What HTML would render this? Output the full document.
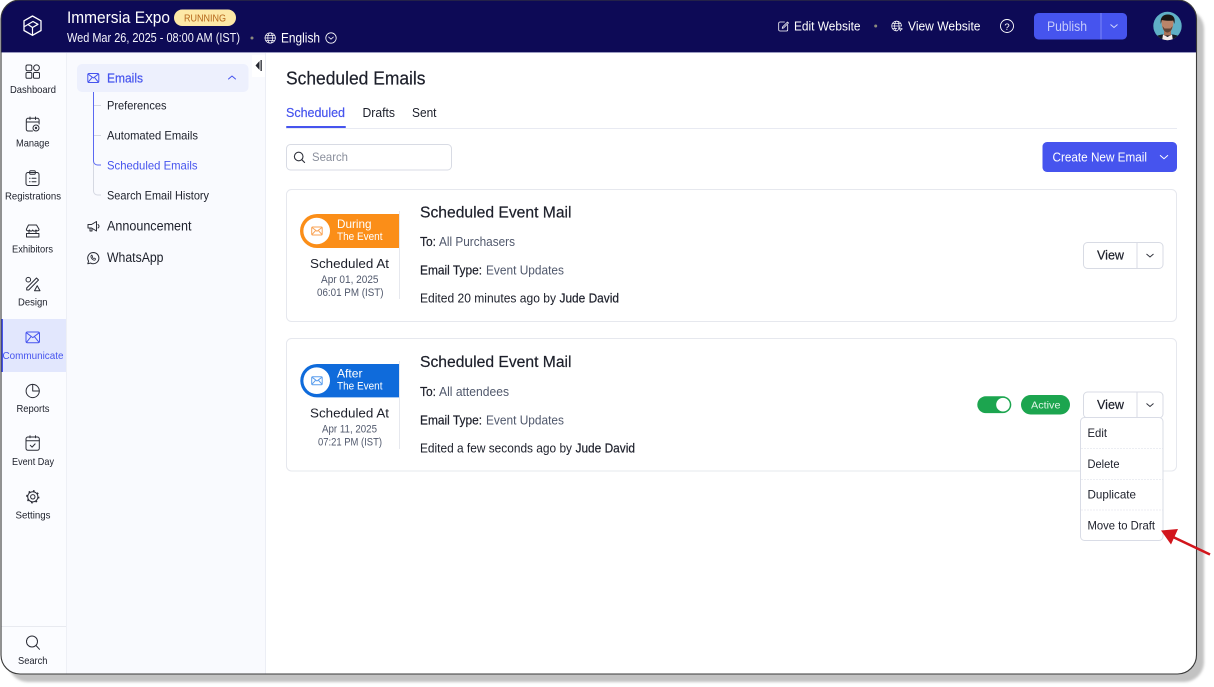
<!DOCTYPE html>
<html><head><meta charset="utf-8"><title>Scheduled Emails</title>
<style>
html,body{margin:0;padding:0;background:#fff;width:1214px;height:687px;overflow:hidden}
svg{display:block}
text{font-family:"Liberation Sans",sans-serif;fill:#1c1f2a}
.m{stroke:#1c1f2a;stroke-width:.2}
.b{fill:#4654ee}
.g{fill:#50586c}
.ic{fill:none;stroke:#2a2c36;stroke-width:1;stroke-linecap:round;stroke-linejoin:round}
.wi{fill:none;stroke:#fff;stroke-width:.9;stroke-linecap:round;stroke-linejoin:round}
.bi{fill:none;stroke:#4654ee;stroke-width:1;stroke-linecap:round;stroke-linejoin:round}
</style></head><body>
<svg width="1214" height="687" viewBox="0 0 1214 687" xmlns="http://www.w3.org/2000/svg">
<defs>
<filter id="bl" x="-5%" y="-5%" width="110%" height="110%"><feGaussianBlur stdDeviation="1.3"/></filter>
<clipPath id="fr"><rect x="1" y="0" width="1195.5" height="674" rx="19"/></clipPath>
<clipPath id="av"><circle cx="1167.5" cy="26" r="14.2"/></clipPath>
</defs>
<rect x="8" y="9" width="1196" height="673" rx="20" fill="#c2c2c2" filter="url(#bl)"/>
<g clip-path="url(#fr)">
<rect x="0" y="0" width="1198" height="675" fill="#fff"/>
<rect x="0" y="0" width="1198" height="52" fill="#0d0a56"/>
<rect x="0" y="52" width="1198" height="1" fill="#9a9ac0"/>
<rect x="1" y="53" width="65" height="622" fill="#fbfcff"/>
<rect x="66" y="53" width="1" height="622" fill="#eef0f6"/>
<rect x="67" y="53" width="198" height="622" fill="#f9fafe"/>
<rect x="265" y="53" width="1" height="622" fill="#eceef5"/>
<rect x="2" y="319" width="64" height="53" fill="#e2e7fd"/>
<rect x="1" y="319" width="2" height="53" fill="#4654ee"/>
<rect x="1" y="626" width="65" height="1" fill="#e8eaf0"/>
</g>
<!-- logo -->
<path d="M32.500 16l8.500 4.800v9.700l-8.500 4.800-8.500-4.800v-9.700z" fill="none" stroke="#fff" stroke-width="1.300" stroke-linejoin="round"/>
<path d="M24.500 26.500L33 21.500l5 2.800-5.500 3.200v7M28 24.500l4.500 3" fill="none" stroke="#fff" stroke-width="1.200" stroke-linejoin="round"/>
<!-- header left -->
<text x="67" y="23" font-size="17" style="fill:#fff" textLength="103" lengthAdjust="spacingAndGlyphs">Immersia Expo</text>
<rect x="174" y="9.500" width="62" height="16.500" rx="8.200" fill="#fde8a6"/>
<text x="184" y="21.300" font-size="10.500" style="fill:#b5661a" textLength="42" lengthAdjust="spacingAndGlyphs">RUNNING</text>
<text x="67" y="42" font-size="13" style="fill:#f4f4fb" textLength="173" lengthAdjust="spacingAndGlyphs">Wed Mar 26, 2025 - 08:00 AM (IST)</text>
<circle cx="252" cy="38" r="1.500" fill="#8b8b7d"/>
<g class="wi" style="stroke-width:.7"><circle cx="270.200" cy="38" r="5.200"/><ellipse cx="270.200" cy="38" rx="2.400" ry="5.200"/><path d="M265 38h10.400M265.800 35.400h8.800M265.800 40.600h8.800"/></g>
<text x="281" y="42.500" font-size="14" style="fill:#fff" textLength="39" lengthAdjust="spacingAndGlyphs">English</text>
<g class="wi" style="stroke-width:.8"><circle cx="331" cy="38" r="5.200"/><path d="M328.600 37l2.400 2.200 2.400-2.200"/></g>
<!-- header right -->
<g class="wi" style="stroke-width:.8"><path d="M784.500 22h-4.500a1.300 1.300 0 0 0-1.300 1.300v6.400a1.300 1.300 0 0 0 1.300 1.300h6.400a1.300 1.300 0 0 0 1.300-1.300v-4.700"/><path d="M782.500 27l5-5 1 1-5 5-1.300.3z"/></g>
<text x="794" y="30.500" font-size="13" style="fill:#fff" textLength="66.500" lengthAdjust="spacingAndGlyphs">Edit Website</text>
<circle cx="875.700" cy="26" r="1.500" fill="#8b8b7d"/>
<g class="wi" style="stroke-width:.7"><path d="M901.500 26a4.900 4.900 0 1 0-4.900 4.900"/><ellipse cx="896.800" cy="26" rx="2.200" ry="4.900"/><path d="M892 26h9.500M892.800 23.500h8M892.800 28.500h4"/><path d="M899 27.500l3.400 1.400-1.400.6-.6 1.400z"/></g>
<text x="908" y="30.500" font-size="13" style="fill:#fff" textLength="72.500" lengthAdjust="spacingAndGlyphs">View Website</text>
<circle cx="1007" cy="26" r="6.500" class="wi"/>
<text x="1004.400" y="29.800" font-size="9.500" style="fill:#fff">?</text>
<rect x="1034" y="13" width="93" height="26.500" rx="4.500" fill="#4654ee"/>
<rect x="1100.500" y="13" width="1" height="26.500" fill="#7c86f5"/>
<text x="1047" y="31" font-size="13.500" style="fill:#c6cbfb" textLength="40" lengthAdjust="spacingAndGlyphs">Publish</text>
<path d="M1110.500 24.500l3.500 3 3.500-3" fill="none" stroke="#d5d9fd" stroke-width="1"/>
<!-- avatar -->
<g clip-path="url(#av)">
<rect x="1152" y="11" width="32" height="30" fill="#5fb0c6"/>
<path d="M1153 41c1-5 4-5.500 9-6.500h11c5 1 8 1.500 9 6.500z" fill="#161a24"/>
<path d="M1163 34.500l4.500 2.500 4.500-2.500 1 6.500h-11z" fill="#f4ecec"/>
<rect x="1164" y="29" width="7" height="6.500" fill="#a87358"/>
<path d="M1161.500 20c0 8 2 12.500 6 12.500s6-4.500 6-12.500z" fill="#b98469"/>
<path d="M1162.500 26c.5 4 2.500 6.500 5 6.500s4.500-2.500 5-6.500l-2 2.500h-6z" fill="#5f4436"/>
<path d="M1160.800 24c-1-6 1.800-9.500 7-9.500s8 3 6.500 9.500l-1-3.500c-3 .5-7 .3-11.500-.5z" fill="#1a1613"/>
</g>
<!-- rail icons -->
<g class="ic">
<rect x="26" y="65" width="5.800" height="5.800" rx="1.500"/><circle cx="36.500" cy="67.800" r="2.900"/><rect x="26" y="72.500" width="5.800" height="5.800" rx="1.200"/><rect x="33.500" y="72.500" width="6" height="5.800" rx="1.200"/>
<path d="M32.500 131H28a1.700 1.700 0 0 1-1.700-1.700V120a1.700 1.700 0 0 1 1.700-1.700h9.400a1.700 1.700 0 0 1 1.700 1.700v4M26.300 122h12.800M30 117v2.500M35.500 117v2.500"/>
<circle cx="36" cy="128" r="3"/><circle cx="36" cy="128" r=".7"/>
<rect x="26" y="172.500" width="13" height="13" rx="2"/><rect x="29.700" y="170.800" width="5.600" height="3.400" rx="1"/><path d="M29.500 178.200h.6M32 178.200h4M29.500 181.800h.6M32 181.800h4"/>
<path d="M28.500 225h8l2.500 4.200a1.600 1.600 0 0 1-3 .8 1.800 1.800 0 0 1-3.300 0 1.800 1.800 0 0 1-3.300 0 1.600 1.600 0 0 1-3-.8z"/><path d="M29 231v2.500M36 231v2.500M26.500 233.500h12.400v3.500H26.500z"/>
<circle cx="28.300" cy="279.700" r="2.300"/><path d="M26.700 288l9.800-10 2 2-9.800 10h-2z"/><path d="M34.500 290.700l2.700-5 2.800 5z"/>
<circle cx="32.700" cy="391" r="6.600"/><path d="M32.700 384.400V391h6.600"/>
<rect x="26" y="437" width="13.300" height="13.300" rx="2"/><path d="M26 440.800h13.300M30 435.800v2M35.500 435.800v2M30.300 445.300l1.800 1.800 3-3.200"/>
<circle cx="32.800" cy="496.800" r="2.200"/>
<circle cx="32.800" cy="496.800" r="5.100"/>
</g>
<circle cx="32.800" cy="496.800" r="5.900" fill="none" stroke="#2a2c36" stroke-width="1.500" stroke-dasharray="1.700 2.930"/>
<g class="ic"><circle cx="32" cy="641.500" r="5.500"/><path d="M36 645.500l3.500 3.800"/></g>
<g class="bi"><rect x="26" y="332" width="13.500" height="10.800" rx="1.500"/><path d="M26.500 332.800l6.300 4.800 6.300-4.800M26.500 342.300l4.500-5.600M39 342.300l-4.500-5.600"/></g>
<!-- rail labels -->
<g font-size="10.300">
<text x="10" y="93" textLength="46" lengthAdjust="spacingAndGlyphs">Dashboard</text>
<text x="16" y="146.300" textLength="33.500" lengthAdjust="spacingAndGlyphs">Manage</text>
<text x="5" y="199.300" textLength="56" lengthAdjust="spacingAndGlyphs">Registrations</text>
<text x="12" y="252.500" textLength="41" lengthAdjust="spacingAndGlyphs">Exhibitors</text>
<text x="18" y="305.500" textLength="29.500" lengthAdjust="spacingAndGlyphs">Design</text>
<text x="2.500" y="359" textLength="61" lengthAdjust="spacingAndGlyphs" class="b">Communicate</text>
<text x="16.500" y="412" textLength="33" lengthAdjust="spacingAndGlyphs">Reports</text>
<text x="12" y="465" textLength="42" lengthAdjust="spacingAndGlyphs">Event Day</text>
<text x="15.500" y="518.500" textLength="35" lengthAdjust="spacingAndGlyphs">Settings</text>
<text x="18" y="664" textLength="29.500" lengthAdjust="spacingAndGlyphs">Search</text>
</g>
<!-- secondary nav -->
<rect x="77" y="64" width="171.500" height="28" rx="5" fill="#edf0fd"/>
<g class="bi"><rect x="87.800" y="73.500" width="11" height="9" rx="1.300"/><path d="M88.300 74.200l5 3.800 5-3.800M88.300 82l3.500-4.200M98.300 82l-3.500-4.200"/><path d="M228.500 79l3.500-3 3.500 3"/></g>
<text x="107" y="82.300" font-size="13" class="b" textLength="36" lengthAdjust="spacingAndGlyphs" stroke="#4654ee" stroke-width=".2">Emails</text>
<path d="M93.500 160V191a4 4 0 0 0 4 4h3.500" fill="none" stroke="#d5d8e2"/>
<path d="M93.500 92V161a4 4 0 0 0 4 4h3.500" fill="none" stroke="#5a68f2"/>
<path d="M94 105.500h7M94 135.500h7" stroke="#d5d8e2"/>
<g font-size="12">
<text x="107" y="109.500" textLength="59.500" lengthAdjust="spacingAndGlyphs">Preferences</text>
<text x="107" y="139.500" textLength="91" lengthAdjust="spacingAndGlyphs">Automated Emails</text>
<text x="107" y="169.500" textLength="90.500" lengthAdjust="spacingAndGlyphs" class="b">Scheduled Emails</text>
<text x="107" y="199.500" textLength="102" lengthAdjust="spacingAndGlyphs">Search Email History</text>
</g>
<g class="ic"><path d="M88 224.500h3.500l5-3v9.500l-5-3H88z"/><path d="M90 228v3h2v-2.500M98 224.500a2 2 0 0 1 0 3.500"/>
<path d="M93.300 252.500a5.600 5.600 0 0 1 0 11.200 5.600 5.600 0 0 1-2.700-.7l-2.800.8.800-2.700a5.600 5.600 0 0 1 4.700-8.600z"/><path d="M91.300 255.600c-.7.500-.6 1.800.6 3.200 1.200 1.300 2.600 1.800 3.300 1l.4-.9-1.500-.9-.6.500c-.6-.2-1.200-.9-1.400-1.500l.5-.6-.8-1.400z" style="stroke-width:.8"/></g>
<text x="107" y="230.500" font-size="13.500" textLength="84.500" lengthAdjust="spacingAndGlyphs">Announcement</text>
<text x="107" y="262" font-size="13.500" textLength="56.500" lengthAdjust="spacingAndGlyphs">WhatsApp</text>
<rect x="252" y="55" width="13" height="22" fill="#fff"/>
<path d="M259.500 61v9l-4-4.500z" fill="#23252e"/><rect x="260.500" y="60" width="1.300" height="11" fill="#23252e"/>
<!-- main -->
<text x="286" y="84.500" font-size="18" textLength="139.500" lengthAdjust="spacingAndGlyphs" class="m">Scheduled Emails</text>
<text x="286" y="117" font-size="13" class="b" stroke="#4654ee" stroke-width=".2" textLength="59" lengthAdjust="spacingAndGlyphs">Scheduled</text>
<text x="362.500" y="117" font-size="13" textLength="32.500" lengthAdjust="spacingAndGlyphs">Drafts</text>
<text x="412" y="117" font-size="13" textLength="24.500" lengthAdjust="spacingAndGlyphs">Sent</text>
<rect x="286" y="128" width="891" height="1" fill="#e8eaf2"/>
<rect x="286" y="126" width="60" height="2" rx="1" fill="#4654ee"/>
<rect x="286.500" y="144.500" width="165" height="25.500" rx="4" fill="#fff" stroke="#d8dbe4"/>
<circle cx="298.700" cy="156.500" r="4.300" fill="none" stroke="#30323c" stroke-width="1.100"/><path d="M301.800 159.700l2.800 2.800" stroke="#30323c" stroke-width="1.100" stroke-linecap="round"/>
<text x="312" y="161" font-size="12" style="fill:#8a8f9c" textLength="36" lengthAdjust="spacingAndGlyphs">Search</text>
<rect x="1042.500" y="142" width="134.500" height="30" rx="4.500" fill="#4654ee"/>
<text x="1052.500" y="161.300" font-size="13" style="fill:#fff" textLength="94.500" lengthAdjust="spacingAndGlyphs">Create New Email</text>
<path d="M1160 155.300l4 3.400 4-3.400" fill="none" stroke="#fff" stroke-width="1"/>
<!-- card 1 -->
<rect x="286.500" y="189.500" width="890" height="132" rx="5" fill="#fff" stroke="#e6e8ee"/>
<rect x="399" y="211" width="1" height="88" fill="#e6e8ee"/>
<path d="M399 214h-82a17 17 0 0 0 0 34h82z" fill="#fb8e18"/>
<circle cx="316.700" cy="231" r="13.300" fill="#fff"/>
<g fill="none" stroke="#f9a355" stroke-width="1"><rect x="311.700" y="227" width="10.500" height="8" rx="1"/><path d="M312 227.500l5 3.800 5-3.800M312 234.500l3.500-3.800M322 234.500l-3.500-3.800"/></g>
<text x="337" y="228" font-size="12" style="fill:#fff" textLength="34.500" lengthAdjust="spacingAndGlyphs">During</text>
<text x="337" y="240" font-size="11" style="fill:#fff" textLength="45.500" lengthAdjust="spacingAndGlyphs">The Event</text>
<text x="310" y="268" font-size="13" textLength="79" lengthAdjust="spacingAndGlyphs">Scheduled At</text>
<text x="321" y="283" font-size="11" class="g" textLength="57.500" lengthAdjust="spacingAndGlyphs">Apr 01, 2025</text>
<text x="317" y="296" font-size="11" class="g" textLength="66.500" lengthAdjust="spacingAndGlyphs">06:01 PM (IST)</text>
<text x="420" y="217.500" font-size="15.500" textLength="151.500" lengthAdjust="spacingAndGlyphs" class="m">Scheduled Event Mail</text>
<text x="420" y="246" font-size="12.500" textLength="16" lengthAdjust="spacingAndGlyphs" class="m">To:</text>
<text x="439" y="246" font-size="12.500" class="g" textLength="76" lengthAdjust="spacingAndGlyphs">All Purchasers</text>
<text x="420" y="274.500" font-size="12.500" textLength="62" lengthAdjust="spacingAndGlyphs" class="m">Email Type:</text>
<text x="486" y="274.500" font-size="12.500" class="g" textLength="78" lengthAdjust="spacingAndGlyphs">Event Updates</text>
<text x="420" y="302.500" font-size="12.500" textLength="136" lengthAdjust="spacingAndGlyphs">Edited 20 minutes ago by</text>
<text x="559.500" y="302.500" font-size="12.500" textLength="59.500" lengthAdjust="spacingAndGlyphs" class="m">Jude David</text>
<rect x="1083.500" y="242.500" width="79.500" height="26" rx="4" fill="#fff" stroke="#d8dbe4"/>
<rect x="1136.500" y="243" width="1" height="25" fill="#d8dbe4"/>
<text x="1097" y="259.500" font-size="13" textLength="27" lengthAdjust="spacingAndGlyphs" class="m">View</text>
<path d="M1146.500 254l3.500 3 3.500-3" fill="none" stroke="#30323c" stroke-width="1"/>
<!-- card 2 -->
<rect x="286.500" y="338.500" width="890" height="132.500" rx="5" fill="#fff" stroke="#e6e8ee"/>
<rect x="399" y="361" width="1" height="88" fill="#e6e8ee"/>
<path d="M399 364h-82a16.700 16.700 0 0 0 0 33.400h82z" fill="#0f6bdb"/>
<circle cx="316.700" cy="380.700" r="13.300" fill="#fff"/>
<g fill="none" stroke="#5a9ded" stroke-width="1"><rect x="311.700" y="376.700" width="10.500" height="8" rx="1"/><path d="M312 377.200l5 3.800 5-3.800M312 384.200l3.500-3.800M322 384.200l-3.500-3.800"/></g>
<text x="337" y="377.500" font-size="12" style="fill:#fff" textLength="25.500" lengthAdjust="spacingAndGlyphs">After</text>
<text x="337" y="389.500" font-size="11" style="fill:#fff" textLength="45.500" lengthAdjust="spacingAndGlyphs">The Event</text>
<text x="310" y="417.500" font-size="13" textLength="79" lengthAdjust="spacingAndGlyphs">Scheduled At</text>
<text x="322" y="432.500" font-size="11" class="g" textLength="55" lengthAdjust="spacingAndGlyphs">Apr 11, 2025</text>
<text x="318" y="445.500" font-size="11" class="g" textLength="64" lengthAdjust="spacingAndGlyphs">07:21 PM (IST)</text>
<text x="420" y="367" font-size="15.500" textLength="151.500" lengthAdjust="spacingAndGlyphs" class="m">Scheduled Event Mail</text>
<text x="420" y="396" font-size="12.500" textLength="16" lengthAdjust="spacingAndGlyphs" class="m">To:</text>
<text x="439" y="396" font-size="12.500" class="g" textLength="70" lengthAdjust="spacingAndGlyphs">All attendees</text>
<text x="420" y="424.500" font-size="12.500" textLength="62" lengthAdjust="spacingAndGlyphs" class="m">Email Type:</text>
<text x="486" y="424.500" font-size="12.500" class="g" textLength="78" lengthAdjust="spacingAndGlyphs">Event Updates</text>
<text x="420" y="452.500" font-size="12.500" textLength="152" lengthAdjust="spacingAndGlyphs">Edited a few seconds ago by</text>
<text x="575.500" y="452.500" font-size="12.500" textLength="59.500" lengthAdjust="spacingAndGlyphs" class="m">Jude David</text>
<rect x="977.300" y="396.300" width="34" height="16.800" rx="8.400" fill="#1ca54f"/>
<circle cx="1003" cy="404.700" r="6.800" fill="#fff"/>
<rect x="1021" y="395" width="49" height="19.500" rx="9.700" fill="#1ca54f"/>
<text x="1031" y="408.700" font-size="10.500" style="fill:#e2f6e9" textLength="29.500" lengthAdjust="spacingAndGlyphs">Active</text>
<rect x="1083.500" y="392" width="79.500" height="26" rx="4" fill="#fff" stroke="#d8dbe4"/>
<rect x="1136.500" y="392.500" width="1" height="25" fill="#d8dbe4"/>
<text x="1097" y="409" font-size="13" textLength="27" lengthAdjust="spacingAndGlyphs" class="m">View</text>
<path d="M1146.500 403.500l3.500 3 3.500-3" fill="none" stroke="#30323c" stroke-width="1"/>
<!-- dropdown -->
<rect x="1080.500" y="417.500" width="82.500" height="123" rx="4" fill="#fff" stroke="#d9dce6"/>
<path d="M1081 448.500h81.500M1081 479.500h81.500M1081 510h81.500" stroke="#eceef3" stroke-dasharray="2 1"/>
<g font-size="11.800">
<text x="1087.500" y="437" textLength="19.500" lengthAdjust="spacingAndGlyphs">Edit</text>
<text x="1087.500" y="468" textLength="32" lengthAdjust="spacingAndGlyphs">Delete</text>
<text x="1087.500" y="498.700" textLength="48.500" lengthAdjust="spacingAndGlyphs">Duplicate</text>
<text x="1087.500" y="529.500" textLength="67.500" lengthAdjust="spacingAndGlyphs">Move to Draft</text>
</g>
<!-- frame border -->
<rect x="1" y="0" width="1195.500" height="674" rx="19" fill="none" stroke="#3a3a3a" stroke-width="1.100"/>
<!-- arrow -->
<path d="M1172 536.500L1210 554.500" stroke="#d2151c" stroke-width="2.600"/>
<path d="M1161 530.500L1178 529L1171 544.500z" fill="#d2151c"/>
</svg>
</body></html>
